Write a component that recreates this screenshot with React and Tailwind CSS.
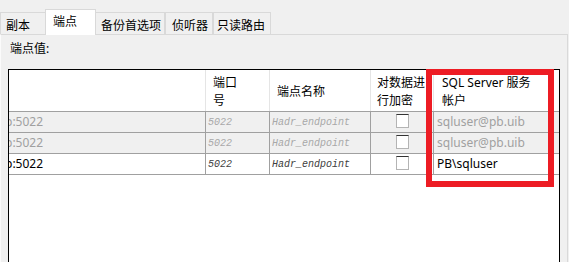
import React from "react";

const tabs = [
  { label: "副本", w: "w-[46px]", pl: "pl-[5px]" },
  { label: "端点", w: "w-[51px]", pl: "pl-[7px]", active: true },
  { label: "备份首选项", w: "w-[70px]", pl: "pl-[5px]" },
  { label: "侦听器", w: "w-[48px]", pl: "pl-[6px]" },
  { label: "只读路由", w: "w-[58px]", pl: "pl-[3px]" },
];

const rows = [{ muted: true }, { muted: true }, { muted: false }];

const cjk = { fontFamily: '"Noto Sans", "Noto Sans CJK SC", sans-serif' };
const mono = { fontFamily: '"Liberation Mono", "DejaVu Sans Mono", monospace' };

function Checkbox() {
  return (
    <div className="w-[13px] h-[14px] bg-white border border-[#b4b4b4] border-t-[#333333]" />
  );
}

export default function App() {
  return (
    <div
      className="relative w-[569px] h-[262px] overflow-hidden bg-[#f0f0f0] text-black"
      style={cjk}
    >
      {/* Tabs */}
      <div className="flex items-end h-[34px]">
        {tabs.map((t) =>
          t.active ? (
            <div
              key={t.label}
              className={`${t.w} ${t.pl} relative z-10 h-[26px] -mb-px bg-white border-t border-x border-[#d9d9d9] text-[12px] leading-[16px] pt-[4px] -mx-px`}
            >
              {t.label}
            </div>
          ) : (
            <div
              key={t.label}
              className={`${t.w} ${t.pl} h-[22px] bg-[#f0f0f0] border-t border-x border-[#d9d9d9] text-[12px] leading-[16px] pt-[5px]`}
            >
              {t.label}
            </div>
          )
        )}
      </div>

      {/* Panel */}
      <div className="w-[568px] h-[240px] border-t border-r border-l border-[#d9d9d9] border-l-[#fbfbfb] pl-[7px]">
        <div className="mt-[6px] pl-[2px] text-[12px] leading-[16px]">端点值:</div>

        {/* Table */}
        <div className="mt-[12px] w-[552px] h-[220px] border border-black bg-white">
          {/* Header */}
          <div className="grid grid-cols-[197px_64px_101px_63px_1fr] h-[42px] border-b border-[#a0a0a0] text-[12px] leading-[18px]">
            <div className="border-r border-[#e5e5e5]" />
            <div className="border-r border-[#e5e5e5] pl-[7px] flex items-center pt-[3px]">
              <div>
                端口
                <br />号
              </div>
            </div>
            <div className="border-r border-[#e5e5e5] pl-[7px] flex items-center pt-[3px]">
              端点名称
            </div>
            <div className="border-r border-[#e5e5e5] pl-[6px] flex items-center pt-[3px] whitespace-nowrap overflow-visible">
              <div>
                对数据进
                <br />
                行加密
              </div>
            </div>
            <div className="pl-[8px] flex items-center pt-[3px] whitespace-nowrap">
              <div>
                SQL Server 服务
                <br />
                帐户
              </div>
            </div>
          </div>

          {/* Rows */}
          {rows.map((r, i) => (
            <div
              key={i}
              className={`grid grid-cols-[197px_64px_101px_63px_1fr] h-[21px] border-b border-[#a0a0a0] ${
                r.muted ? "bg-[#f0f0f0]" : "bg-white"
              }`}
            >
              <div
                className={`border-r border-[#a0a0a0] overflow-hidden flex items-center text-[12px] whitespace-nowrap ${
                  r.muted ? "text-[#a0a0a0]" : "text-black"
                }`}
              >
                <span className="-ml-[4px]">p:5022</span>
              </div>
              <div
                className={`border-r border-[#a0a0a0] flex items-center pl-[2px] italic text-[10px] ${
                  r.muted ? "text-[#a8a8a8]" : "text-[#404040]"
                }`}
                style={mono}
              >
                5022
              </div>
              <div
                className={`border-r border-[#a0a0a0] flex items-center pl-[2px] italic text-[10px] whitespace-nowrap ${
                  r.muted ? "text-[#a8a8a8]" : "text-[#404040]"
                }`}
                style={mono}
              >
                Hadr_endpoint
              </div>
              <div className="border-r border-[#a0a0a0] flex items-start justify-center pt-[2px]">
                <Checkbox />
              </div>
              <div
                className={`flex items-center pl-[3px] text-[12px] whitespace-nowrap ${
                  r.muted ? "text-[#a0a0a0]" : "text-black"
                }`}
              >
                {r.muted ? "sqluser@pb.uib" : "PB\\sqluser"}
              </div>
            </div>
          ))}
        </div>
      </div>

      {/* Red annotation box */}
      <div className="absolute left-[426px] top-[69px] w-[128px] h-[118px] border-[6px] border-[#ed1c24]" />
    </div>
  );
}
